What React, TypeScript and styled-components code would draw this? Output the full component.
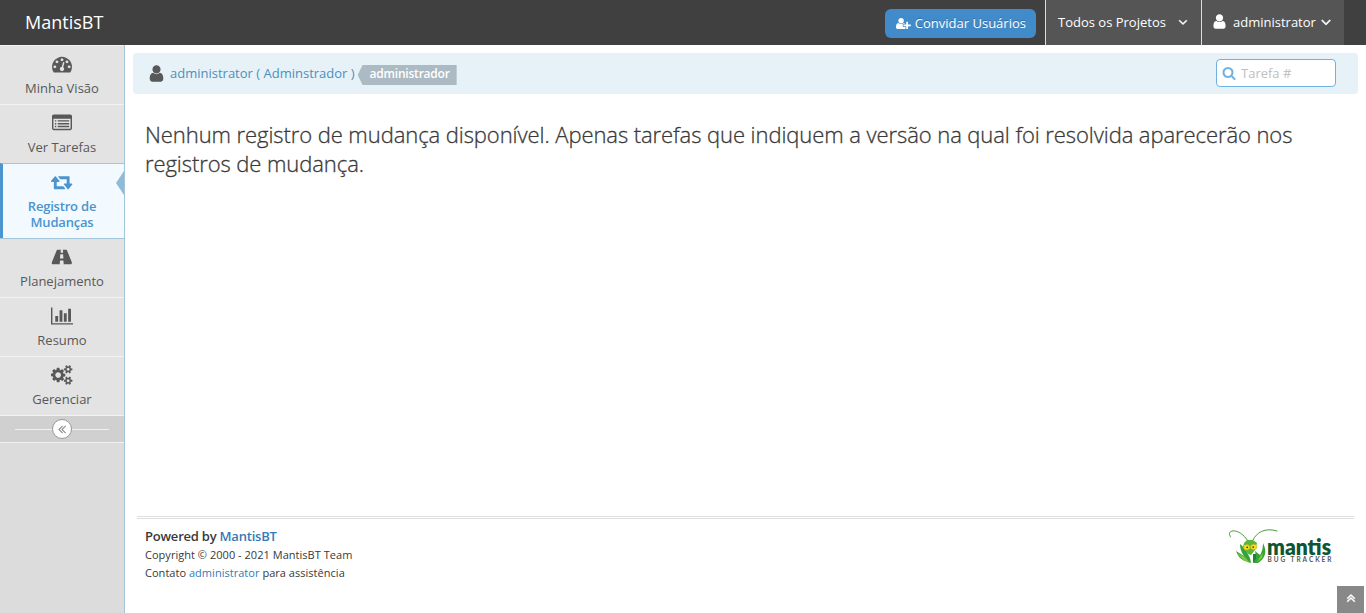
import React from 'react';
import styled, { createGlobalStyle, css } from 'styled-components';

const GlobalStyle = createGlobalStyle`
  *, *::before, *::after { box-sizing: border-box; }
  html, body { margin: 0; padding: 0; }
  body {
    font-family: 'Open Sans', 'Liberation Sans', sans-serif;
    font-size: 13px;
    line-height: 19.5px;
    color: #393939;
    background: #fff;
    overflow: hidden;
  }
  a { text-decoration: none; color: #337ab7; }
`;

/* ---------- icons ---------- */

const GEAR = 'q0 16-149 31-12 27-30 52 51 113 51 138 0 4-4 7-122 71-124 71-8 0-46-47t-52-68q-20 2-30 2t-30-2q-14 21-52 68t-46 47q-2 0-124-71-4-3-4-7 0-25 51-138-18-25-30-52-149-15-149-31v-140q0-16 149-31 13-29 30-52-51-113-51-138 0-4 4-7 4-2 35-20t59-34 30-16q8 0 46 46.5t52 67.5q20-2 30-2t30 2q51-71 92-112l6-2q4 0 124 70 4 3 4 7 0 25-51 138 17 23 30 52 149 15 149 31z';
const DOT = 'q0-53-37.5-90.5t-90.5-37.5-90.5 37.5-37.5 90.5 37.5 90.5 90.5 37.5 90.5-37.5 37.5-90.5z';
const LEFT = 'q0 13-10 23l-50 50q-10 10-23 10t-23-10l-466-466q-10-10-10-23t10-23l466-466q10-10 23-10t23 10l50 50q10 10 10 23t-10 23l-393 393 393 393q10 10 10 23z';
const UP = 'q0 13-10 23l-50 50q-10 10-23 10t-23-10l-393-393-393 393q-10 10-23 10t-23-10l-50-50q-10-10-10-23t10-23l466-466q10-10 23-10t23 10l466 466q10 10 10 23z';

const icons = {
  user: { w: 1792, d: 'M1536 1399q0 109-62.5 187t-150.5 78h-854q-88 0-150.5-78t-62.5-187q0-85 8.5-160.5t31.5-152 58.5-131 94-89 134.5-34.5q131 128 313 128t313-128q76 0 134.5 34.5t94 89 58.5 131 31.5 152 8.5 160.5zm-256-887q0 159-112.5 271.5t-271.5 112.5-271.5-112.5-112.5-271.5 112.5-271.5 271.5-112.5 271.5 112.5 112.5 271.5z' },
  userPlus: { w: 2048, d: 'M704 896q-159 0-271.5-112.5t-112.5-271.5 112.5-271.5 271.5-112.5 271.5 112.5 112.5 271.5-112.5 271.5-271.5 112.5zm960 128h352q13 0 22.5 9.5t9.5 22.5v192q0 13-9.5 22.5t-22.5 9.5h-352v352q0 13-9.5 22.5t-22.5 9.5h-192q-13 0-22.5-9.5t-9.5-22.5v-352h-352q-13 0-22.5-9.5t-9.5-22.5v-192q0-13 9.5-22.5t22.5-9.5h352v-352q0-13 9.5-22.5t22.5-9.5h192q13 0 22.5 9.5t9.5 22.5v352zm-736 224q0 52 38 90t90 38h256v238q-68 50-171 50h-874q-121 0-194-69t-73-190q0-53 3.5-103.5t14-109 26.5-108.5 43-97.5 62-81 85.5-53.5 111.5-20q19 0 39 17 79 61 154.5 91.5t164.5 30.5 164.5-30.5 154.5-91.5q20-17 39-17 132 0 217 96h-223q-52 0-90 38t-38 90v192z' },
  angleDown: { w: 1792, d: 'M1395 736q0 13-10 23l-466 466q-10 10-23 10t-23-10l-466-466q-10-10-10-23t10-23l50-50q10-10 23-10t23 10l393 393 393-393q10-10 23-10t23 10l50 50q10 10 10 23z' },
  doubleLeft: { w: 1792, d: `M1011 1376${LEFT}m384 0${LEFT}` },
  doubleUp: { w: 1792, d: `M1395 1312${UP}m0-384${UP}` },
  search: { w: 1792, d: 'M1216 832q0-185-131.5-316.5t-316.5-131.5-316.5 131.5-131.5 316.5 131.5 316.5 316.5 131.5 316.5-131.5 131.5-316.5zm512 832q0 52-38 90t-90 38q-54 0-90-38l-343-342q-179 124-399 124-143 0-273.5-55.5t-225-150-150-225-55.5-273.5 55.5-273.5 150-225 225-150 273.5-55.5 273.5 55.5 225 150 150 225 55.5 273.5q0 220-124 399l343 343q37 37 37 90z' },
  dashboard: { w: 1792, d: `M384 1152${DOT}m192-448${DOT}m428 481l101-382q6-26-7.5-48.5t-38.5-29.5-48 6.5-30 39.5l-101 382q-60 5-107 43.5t-63 98.5q-20 77 20 146t117 89 146-20 89-117q16-60-6-117t-72-91zm660-33${DOT}m-640-640${DOT}m448 192${DOT}m320 448q0 261-141 483-19 29-54 29h-1402q-35 0-54-29-141-221-141-483 0-182 71-348t191-286 286-191 348-71 348 71 286 191 191 286 71 348z` },
  list: { w: 1792, d: 'M160 128h1472q66 0 113 47t47 113v1088q0 66-47 113t-113 47h-1472q-66 0-113-47t-47-113v-1088q0-66 47-113t113-47zm-32 384v864q0 32 32 32h1472q32 0 32-32v-864zM256 640h128v128h-128zM512 640h1024v128h-1024zM256 896h128v128h-128zM512 896h1024v128h-1024zM256 1152h128v128h-128zM512 1152h1024v128h-1024z' },
  retweet: { w: 1920, d: 'M1280 1504q0 13-9.5 22.5t-22.5 9.5h-960q-8 0-13.5-2t-9-7-5.5-8-3-11.5-1-11.5v-600h-192q-26 0-45-19t-19-45q0-24 15-41l320-384q19-22 49-22t49 22l320 384q15 17 15 41 0 26-19 45t-45 19h-192v384h576q16 0 25 11l160 192q7 10 7 21zm640-416q0 24-15 41l-320 384q-20 23-49 23t-49-23l-320-384q-15-17-15-41 0-26 19-45t45-19h192v-384h-576q-16 0-25-12l-160-192q-7-9-7-20 0-13 9.5-22.5t22.5-9.5h960q8 0 13.5 2t9 7 5.5 8 3 11.5 1 11.5v600h192q26 0 45 19t19 45z' },
  road: { w: 1920, d: 'M1111 1000v-4l-24-320q-1-13-11-22.5t-23-9.5h-186q-13 0-23 9.5t-11 22.5l-24 320v4q-1 12 8 20t21 8h244q12 0 21-8t8-20zm746 463q0 73-46 73h-704q13 0 22-9.5t8-22.5l-20-256q-1-13-11-22.5t-23-9.5h-246q-13 0-23 9.5t-11 22.5l-20 256q-1 13 8 22.5t22 9.5h-704q-46 0-46-73 0-54 26-116l417-1044q8-19 26-33t38-14h339q-13 0-23 9.5t-11 22.5l-15 192q-1 14 8 23t22 9h166q13 0 22-9t8-23l-15-192q-1-13-11-22.5t-23-9.5h339q20 0 38 14t26 33l417 1044q26 62 26 116z' },
  chart: { w: 2048, d: 'M640 896v512h-256v-512h256zm384-512v1024h-256v-1024h256zm1024 1152v128h-2048v-1536h128v1408h1920zm-640-896v768h-256v-768h256zm384-384v1152h-256v-1152h256z' },
  cogs: { w: 1920, d: `M896 896q0-106-75-181t-181-75-181 75-75 181 75 181 181 75 181-75 75-181zm768 512q0-52-38-90t-90-38-90 38-38 90q0 53 37.5 90.5t90.5 37.5 90.5-37.5 37.5-90.5zm0-1024q0-52-38-90t-90-38-90 38-38 90q0 53 37.5 90.5t90.5 37.5 90.5-37.5 37.5-90.5zm-384 421v185q0 10-7 19.5t-16 10.5l-155 24q-11 35-32 76 34 48 90 115 7 11 7 20 0 12-7 19-23 30-82.5 89.5t-78.5 59.5q-11 0-21-7l-115-90q-37 19-77 31-11 108-23 155-7 24-30 24h-186q-11 0-20-7.5t-10-17.5l-23-153q-34-10-75-31l-118 89q-7 7-20 7-11 0-21-8-144-133-144-160 0-9 7-19 10-14 41-53t47-61q-23-44-35-82l-152-24q-10-1-17-9.5t-7-19.5v-185q0-10 7-19.5t16-10.5l155-24q11-35 32-76-34-48-90-115-7-11-7-20 0-12 7-20 22-30 82-89t79-59q11 0 21 7l115 90q34-18 77-32 11-108 23-154 7-24 30-24h186q11 0 20 7.5t10 17.5l23 153q34 10 75 31l118-89q8-7 20-7 11 0 21 8 144 133 144 160 0 8-7 19-12 16-42 54t-45 60q23 48 34 82l152 23q10 2 17 10.5t7 19.5zM1920 1338v140${GEAR}M1920 314v140${GEAR}` },
};

type IconName = keyof typeof icons;

const Svg = styled.svg`
  display: block;
  flex: none;
  fill: currentColor;
`;

const Icon = ({ name, size, bold }: { name: IconName; size: number; bold?: boolean }) => {
  const { w, d } = icons[name];
  return (
    <Svg
      width={(size * w) / 1792}
      height={size}
      viewBox={`0 0 ${w} 1792`}
      fillRule={name === 'list' ? 'evenodd' : 'nonzero'}
      stroke={bold ? 'currentColor' : 'none'}
      strokeWidth={bold ? 70 : 0}
      aria-hidden="true"
    >
      <path d={d} />
    </Svg>
  );
};

/* ---------- top bar ---------- */

const Page = styled.div`
  height: 613px;
  display: flex;
  flex-direction: column;
`;

const Navbar = styled.header`
  height: 45px;
  flex: none;
  display: flex;
  align-items: flex-start;
  padding-right: 22px;
  background: #404040;
  color: #fff;
`;

const Brand = styled.a`
  margin-right: auto;
  padding-left: 25px;
  font-size: 18px;
  line-height: 44px;
  && { color: #fff; }
`;

const InviteButton = styled.button`
  display: flex;
  align-items: center;
  gap: 4px;
  width: 151px;
  height: 29px;
  margin: 9px 9px 0 0;
  padding: 0 0 0 11px;
  border: 0;
  border-radius: 6px;
  background: #428bca;
  color: #fff;
  font: 13px/29px 'Open Sans', sans-serif;
  text-shadow: 0 -1px 0 rgba(0, 0, 0, 0.25);
  white-space: nowrap;
`;

const NavItem = styled.a<{ $width: number; $gap: number; $pad: number }>`
  display: flex;
  align-items: center;
  gap: ${(p) => p.$gap}px;
  width: ${(p) => p.$width}px;
  height: 45px;
  padding-left: ${(p) => p.$pad}px;
  border-left: 1px solid #ddd;
  background: #555;
  line-height: 45px;
  white-space: nowrap;
  && { color: #fff; }
  svg { margin-bottom: 2px; }
`;

const UserName = styled.span`
  margin: 0 -2px 0 1px;
`;

/* ---------- sidebar ---------- */

const Body = styled.div`
  flex: 1;
  display: flex;
  min-height: 0;
`;

const Sidebar = styled.nav`
  width: 125px;
  flex: none;
  border-right: 1px solid #a3c5da;
  background: #dcdcdc;
`;

const MenuItem = styled.a<{ $active?: boolean }>`
  display: flex;
  flex-direction: column;
  align-items: center;
  position: relative;
  height: ${(p) => (p.$active ? 75 : 59)}px;
  padding-top: 8px;
  border-top: 1px solid #f2f2f2;
  background: #e3e3e3;
  text-align: center;
  line-height: 16px;
  && { color: #585858; }
  ${(p) => p.$active && css`
    padding-right: 3px;
    border-top-color: #a3c5da;
    border-left: 3px solid #4b94cd;
    background: #f2f9ff;
    font-weight: 600;
    letter-spacing: -0.2px;
    && { color: #4b94cd; }
    &::after {
      content: '';
      position: absolute;
      right: 0;
      top: 7px;
      border: solid transparent;
      border-width: 12px 8px 12px 0;
      border-right-color: #91bad6;
    }
    & + a { border-top-color: #a3c5da; }
  `}
`;

const MenuLabel = styled.span`
  width: 90px;
  margin-top: 6px;
`;

const Collapse = styled.div`
  display: flex;
  align-items: center;
  height: 28px;
  padding: 0 15px;
  border: solid #f2f2f2;
  border-width: 1px 0;
  background: #d0d0d0;
`;

const CollapseLine = styled.span`
  flex: 1;
  height: 1px;
  background: #f2f2f2;
`;

const CollapseButton = styled.span`
  display: flex;
  align-items: center;
  justify-content: center;
  width: 20px;
  height: 20px;
  border: 1px solid #999;
  border-radius: 50%;
  background: #fff;
  color: #888;
`;

/* ---------- content ---------- */

const Main = styled.main`
  flex: 1;
  min-width: 0;
  display: flex;
  flex-direction: column;
  padding: 8px 8px 0;
`;

const Breadcrumb = styled.div`
  display: flex;
  align-items: center;
  height: 41px;
  padding: 0 22px 1px 14px;
  border-radius: 4px;
  background: #e7f2f8;
  color: #585858;
`;

const UserLink = styled.a`
  margin: 1px 0 0 4px;
  && { color: #4c8fbd; }
`;

const Tag = styled.span`
  width: 99px;
  height: 20px;
  margin: 4px auto 0 3px;
  padding-left: 12px;
  background: #abbac3;
  clip-path: polygon(0 50%, 5px 0, 100% 0, 100% 100%, 5px 100%);
  color: #fff;
  font-weight: 600;
  font-size: 12px;
  letter-spacing: -0.22px;
  line-height: 18px;
`;

const SearchBox = styled.label`
  display: flex;
  align-items: center;
  gap: 5px;
  width: 120px;
  height: 28px;
  padding-left: 5px;
  border: 1px solid #6fb3e0;
  border-radius: 4px;
  background: #fff;
  color: #6fb3e0;
`;

const SearchInput = styled.input`
  width: 80px;
  padding: 0;
  border: 0;
  outline: 0;
  background: none;
  font: 13px 'Open Sans', sans-serif;
  &::placeholder { color: #c0c0c0; opacity: 1; }
`;

const Message = styled.p`
  margin: 26px 0 0;
  padding: 0 12px;
  font-size: 22px;
  font-weight: 300;
  letter-spacing: -0.075px;
  -webkit-text-stroke: 0.3px currentColor;
  line-height: 29px;
`;

const Footer = styled.footer`
  display: flex;
  justify-content: space-between;
  height: 97px;
  margin: auto 4px 0;
  padding: 8px 21px 0 8px;
  border-top: 3px double #e0e0e0;
`;

const Credits = styled.div`
  font-size: 11px;
  line-height: 18px;
  letter-spacing: 0.03px;
`;

const Powered = styled.strong`
  display: block;
  padding-bottom: 1px;
  font-size: 13px;
  font-weight: 600;
  letter-spacing: -0.22px;
`;

const ScrollUp = styled.a`
  position: fixed;
  right: 2px;
  bottom: 0;
  display: flex;
  align-items: center;
  justify-content: center;
  width: 27px;
  height: 27px;
  padding-bottom: 3px;
  background: #888;
  && { color: #fff; }
`;

const LogoSvg = styled.svg`
  flex: none;
  overflow: visible;
`;

const MantisLogo = () => (
  <LogoSvg width="106" height="40" viewBox="0 0 106 40" aria-label="Mantis Bug Tracker">
    <g fill="none" stroke="#4f9a3c" strokeWidth="1" strokeLinecap="round">
      <path d="M21 14C17 8 11 3 5 4C2 5 2 7 3.5 10" />
      <path d="M26 13C29 6 38 0 50 4" />
    </g>
    <path fill="#58b83a" d="M17 16L20 13L26 13L30 16L28 23L24 28L21 27L16 20Z" />
    <path fill="#36a338" d="M13 17C17 20 20 25 23 31L24 36L18 34C13 32 11 29 9 24L17 29C14 25 13 21 13 17Z" />
    <path fill="#7cc83f" d="M10 26L18 30L23 36L16 33Z" />
    <path fill="#36a338" d="M36 16C40 24 39 31 31 36L26 36C29 32 29 28 28 24L33 28C35 25 36 21 36 16Z" />
    <path fill="#7cc83f" d="M34 28L36 26L35 31L30 35Z" />
    <path fill="#1b8436" d="M26 27L29 27L29 32L26 36Z" />
    <ellipse cx="19.7" cy="20.3" rx="3.2" ry="2.8" fill="#f6df1c" stroke="#c39e19" strokeWidth="0.5" />
    <ellipse cx="26.7" cy="20" rx="3.2" ry="2.8" fill="#f6df1c" stroke="#c39e19" strokeWidth="0.5" />
    <circle cx="20.2" cy="20.3" r="0.9" fill="#5b3413" />
    <circle cx="26.2" cy="20.1" r="0.9" fill="#5b3413" />
    <text x="40" y="28" textLength="64" lengthAdjust="spacingAndGlyphs" fontFamily="Lato, sans-serif" fontWeight="800" fontSize="22" fill="#0d5535">mantis</text>
    <text x="40.5" y="34.5" textLength="64" fontFamily="Lato, sans-serif" fontWeight="700" fontSize="6.5" fill="#555">BUG TRACKER</text>
  </LogoSvg>
);

const menu: { icon: IconName; label: string; active?: boolean }[] = [
  { icon: 'dashboard', label: 'Minha Visão' },
  { icon: 'list', label: 'Ver Tarefas' },
  { icon: 'retweet', label: 'Registro de Mudanças', active: true },
  { icon: 'road', label: 'Planejamento' },
  { icon: 'chart', label: 'Resumo' },
  { icon: 'cogs', label: 'Gerenciar' },
];

export default function App() {
  return (
    <Page>
      <GlobalStyle />
      <Navbar>
        <Brand>MantisBT</Brand>
        <InviteButton>
          <Icon name="userPlus" size={13} />
          Convidar Usuários
        </InviteButton>
        <NavItem $width={156} $gap={10} $pad={12}>
          Todos os Projetos
          <Icon name="angleDown" size={14} bold />
        </NavItem>
        <NavItem $width={143} $gap={4} $pad={9}>
          <Icon name="user" size={17} />
          <UserName>administrator</UserName>
          <Icon name="angleDown" size={16} bold />
        </NavItem>
      </Navbar>
      <Body>
        <Sidebar>
          {menu.map((m) => (
            <MenuItem key={m.label} $active={m.active}>
              <Icon name={m.icon} size={20} />
              <MenuLabel>{m.label}</MenuLabel>
            </MenuItem>
          ))}
          <Collapse>
            <CollapseLine />
            <CollapseButton>
              <Icon name="doubleLeft" size={14} />
            </CollapseButton>
            <CollapseLine />
          </Collapse>
        </Sidebar>
        <Main>
          <Breadcrumb>
            <Icon name="user" size={19} />
            <UserLink>administrator ( Adminstrador )</UserLink>
            <Tag>administrador</Tag>
            <SearchBox>
              <Icon name="search" size={14} />
              <SearchInput placeholder="Tarefa #" />
            </SearchBox>
          </Breadcrumb>
          <Message>
            Nenhum registro de mudança disponível. Apenas tarefas que indiquem a versão na qual foi resolvida aparecerão nos registros de mudança.
          </Message>
          <Footer>
            <Credits>
              <Powered>
                Powered by <a>MantisBT</a>
              </Powered>
              <div>Copyright © 2000 - 2021 MantisBT Team</div>
              <div>
                Contato <a>administrator</a> para assistência
              </div>
            </Credits>
            <MantisLogo />
          </Footer>
        </Main>
      </Body>
      <ScrollUp>
        <Icon name="doubleUp" size={14} bold />
      </ScrollUp>
    </Page>
  );
}
